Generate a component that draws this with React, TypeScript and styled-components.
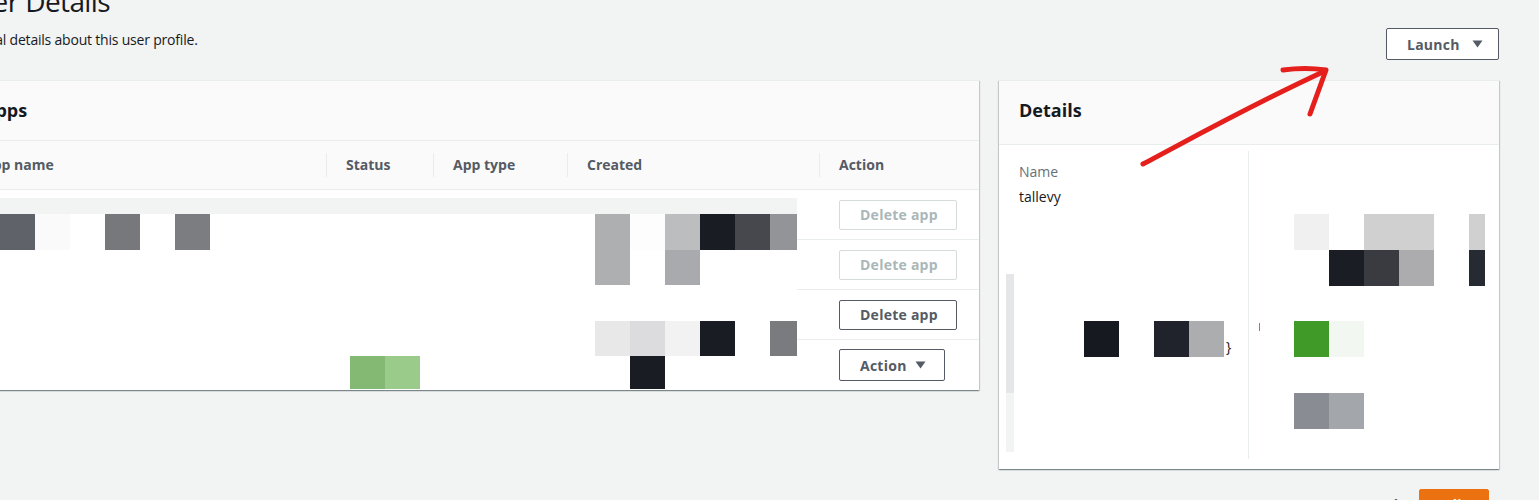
import React from 'react';
import styled, { createGlobalStyle } from 'styled-components';

type Cell = { c: number; r: number; color: string; span?: number };

const appsCells: Cell[] = [
  { c: 0, r: 0, color: '#5f6268' },
  { c: 1, r: 0, color: '#fafafa' },
  { c: 3, r: 0, color: '#77787c' },
  { c: 5, r: 0, color: '#7c7d81' },
  { c: 17, r: 0, color: '#aeafb0' },
  { c: 18, r: 0, color: '#fdfdfd' },
  { c: 19, r: 0, color: '#bcbdbe' },
  { c: 20, r: 0, color: '#1a1c23' },
  { c: 21, r: 0, color: '#46484d' },
  { c: 22, r: 0, color: '#939497' },
  { c: 17, r: 1, color: '#aeafb0' },
  { c: 19, r: 1, color: '#a9aaad' },
  { c: 17, r: 3, color: '#e8e8e8' },
  { c: 18, r: 3, color: '#dcdcde' },
  { c: 19, r: 3, color: '#f2f2f2' },
  { c: 20, r: 3, color: '#1a1c23' },
  { c: 22, r: 3, color: '#7a7b7e' },
  { c: 10, r: 4, color: '#84b974' },
  { c: 11, r: 4, color: '#9bcb8b' },
  { c: 18, r: 4, color: '#1a1c23' },
];

const detailCells: Cell[] = [
  { c: 6, r: 0, color: '#f0f0f0' },
  { c: 8, r: 0, color: '#d0d0d0', span: 2 },
  { c: 11, r: 0, color: '#d0d0d0' },
  { c: 7, r: 1, color: '#1a1d24' },
  { c: 8, r: 1, color: '#3a3b40' },
  { c: 9, r: 1, color: '#acacae' },
  { c: 11, r: 1, color: '#262a33' },
  { c: 0, r: 3, color: '#161920' },
  { c: 2, r: 3, color: '#20232b' },
  { c: 3, r: 3, color: '#acadaf' },
  { c: 6, r: 3, color: '#3f9a27' },
  { c: 7, r: 3, color: '#f2f8f1' },
  { c: 6, r: 5, color: '#898c92' },
  { c: 7, r: 5, color: '#a3a6aa' },
];

const GlobalStyle = createGlobalStyle`
  html, body {
    margin: 0;
    padding: 0;
    background: #f2f3f3;
    font-family: "Open Sans", "Noto Sans", sans-serif;
    color: #16191f;
  }
  * { box-sizing: border-box; }
`;

const Caret = () => (
  <svg width="11" height="8" viewBox="0 0 11 8">
    <path d="M0.5 0.5 H10.5 L5.5 7.5 Z" />
  </svg>
);

const App: React.FC = () => {
  return (
    <Screen>
      <GlobalStyle />
      <Page>
        <Header>
          <div>
            <Title>User Details</Title>
            <Subtitle>General details about this user profile.</Subtitle>
          </div>
          <Button $width={113} $height={32} $pad={20} $gap={12}>
            Launch
            <Caret />
          </Button>
        </Header>

        <Columns>
          <Panel>
            <PanelHeader $height={59}>
              <PanelTitle>Apps</PanelTitle>
            </PanelHeader>
            <HeadRow>
              <HeadCell>App name</HeadCell>
              <HeadCell $divider>Status</HeadCell>
              <HeadCell $divider>App type</HeadCell>
              <HeadCell $divider>Created</HeadCell>
              <HeadCell $divider>Action</HeadCell>
            </HeadRow>
            <TableBody>
              <Row>
                <ActionCell>
                  <Button $width={118} $height={30} $pad={20} $disabled>
                    Delete app
                  </Button>
                </ActionCell>
              </Row>
              <Row>
                <ActionCell>
                  <Button $width={118} $height={30} $pad={20} $disabled>
                    Delete app
                  </Button>
                </ActionCell>
              </Row>
              <Row>
                <ActionCell>
                  <Button $width={118} $height={30} $pad={20}>
                    Delete app
                  </Button>
                </ActionCell>
              </Row>
              <Row $last>
                <ActionCell>
                  <Button $width={106} $height={32} $pad={20} $gap={8}>
                    Action
                    <Caret />
                  </Button>
                </ActionCell>
              </Row>
              <AppsRedaction>
                <Band />
                <Mosaic $cols="repeat(23, 35px)" $rowH={35.6} $left={37}>
                  {appsCells.map((b, i) => (
                    <Block key={i} $c={b.c} $r={b.r} $span={b.span} $color={b.color} />
                  ))}
                </Mosaic>
              </AppsRedaction>
            </TableBody>
          </Panel>

          <Panel>
            <PanelHeader $height={63}>
              <PanelTitle>Details</PanelTitle>
            </PanelHeader>
            <DetailsBody>
              <DetailsColumn>
                <Label>Name</Label>
                <Value>tallevy</Value>
              </DetailsColumn>
              <DetailsColumn $divider />
            </DetailsBody>
            <DetailsRedaction>
              <SideBar />
              <Mosaic
                $cols="repeat(11, 35px) 16px"
                $rowH={35.8}
                $left={85}
                $top={133}
              >
                {detailCells.map((b, i) => (
                  <Block key={i} $c={b.c} $r={b.r} $span={b.span} $color={b.color} />
                ))}
                <Brace>{'}'}</Brace>
                <GreenTick />
              </Mosaic>
            </DetailsRedaction>
          </Panel>
        </Columns>

        <Footer>
          <LinkButton>Cancel</LinkButton>
          <PrimaryButton>Edit</PrimaryButton>
        </Footer>
      </Page>

      <Annotation width="1539" height="500" viewBox="0 0 1539 500">
        <path
          d="M1143 164 C1185 142, 1245 108, 1325 71"
          fill="none"
          stroke="#e41f1c"
          strokeWidth="5"
          strokeLinecap="round"
        />
        <path
          d="M1283 70 Q1305 67 1326 70 Q1318 92 1310 114"
          fill="none"
          stroke="#e41f1c"
          strokeWidth="5"
          strokeLinecap="round"
          strokeLinejoin="round"
        />
      </Annotation>
    </Screen>
  );
};

const Screen = styled.div`
  position: relative;
  height: 500px;
  overflow: hidden;
`;

const Page = styled.div`
  margin-left: -37px;
  margin-top: -17px;
  width: calc(100% + 37px);
  padding-right: 40px;
`;

const Header = styled.div`
  display: flex;
  justify-content: space-between;
  align-items: flex-end;
  margin-bottom: 20px;
`;

const Title = styled.h1`
  margin: 0 0 0 -3px;
  font-size: 28px;
  line-height: 36px;
  font-weight: 400;
  letter-spacing: -0.6px;
  color: #16191f;
`;

const Subtitle = styled.p`
  margin: 10px 0 9px -7px;
  font-size: 14px;
  line-height: 22px;
  letter-spacing: -0.2px;
  color: #16191f;
`;

const Button = styled.button<{
  $width: number;
  $height: number;
  $pad: number;
  $gap?: number;
  $disabled?: boolean;
}>`
  display: inline-flex;
  align-items: center;
  justify-content: flex-start;
  gap: ${(p) => p.$gap ?? 0}px;
  width: ${(p) => p.$width}px;
  height: ${(p) => p.$height}px;
  padding: 0 0 0 ${(p) => p.$pad}px;
  background: #fff;
  border: 1px solid ${(p) => (p.$disabled ? '#d5dbdb' : '#545b64')};
  border-radius: 2px;
  color: ${(p) => (p.$disabled ? '#aab7b8' : '#545b64')};
  font-family: inherit;
  font-size: 14px;
  font-weight: 700;
  letter-spacing: 0.25px;

  svg path {
    fill: ${(p) => (p.$disabled ? '#aab7b8' : '#545b64')};
  }
`;

const Columns = styled.div`
  display: grid;
  grid-template-columns: 1fr 500px;
  gap: 20px;
  align-items: start;
`;

const Panel = styled.section`
  position: relative;
  background: #fff;
  border-top: 1px solid #eaeded;
  box-shadow: 0 1px 1px 0 rgba(0, 28, 36, 0.3), 1px 1px 1px 0 rgba(0, 28, 36, 0.15),
    -1px 1px 1px 0 rgba(0, 28, 36, 0.15);
`;

const PanelHeader = styled.div<{ $height: number }>`
  height: ${(p) => p.$height + 1}px;
  padding: 18px 20px 0;
  background: #fafafa;
  border-bottom: 1px solid #eaeded;
`;

const PanelTitle = styled.h2`
  margin: 0;
  font-size: 18px;
  line-height: 22px;
  font-weight: 700;
  color: #16191f;
`;

const HeadRow = styled.div`
  display: grid;
  grid-template-columns: 1fr 107px 134px 252px 160px;
  height: 49px;
  background: #fafafa;
  border-bottom: 1px solid #eaeded;
`;

const HeadCell = styled.div<{ $divider?: boolean }>`
  position: relative;
  display: flex;
  align-items: center;
  padding: 0 0 2px 20px;
  font-size: 14px;
  font-weight: 700;
  color: #545b64;

  &::before {
    content: '';
    display: ${(p) => (p.$divider ? 'block' : 'none')};
    position: absolute;
    left: 0;
    top: 12px;
    bottom: 12px;
    width: 1px;
    background: #eaeded;
  }
`;

const TableBody = styled.div`
  position: relative;
`;

const Row = styled.div<{ $last?: boolean }>`
  display: grid;
  grid-template-columns: 1fr 160px;
  height: 50px;
  border-bottom: ${(p) => (p.$last ? 'none' : '1px solid #eaeded')};

  & > * {
    grid-column: 2;
  }
`;

const ActionCell = styled.div`
  display: flex;
  align-items: center;
  padding-left: 20px;
`;

const AppsRedaction = styled.div`
  position: absolute;
  left: 0;
  top: 0;
  width: 834px;
  height: 199px;
  overflow: hidden;
  background: #fff;
`;

const Band = styled.div`
  height: 16px;
  margin-top: 8px;
  background: #f2f3f3;
`;

const Mosaic = styled.div<{ $cols: string; $rowH: number; $left: number; $top?: number }>`
  display: grid;
  grid-template-columns: ${(p) => p.$cols};
  grid-template-rows: repeat(6, ${(p) => p.$rowH}px);
  margin-left: ${(p) => p.$left}px;
  margin-top: ${(p) => p.$top ?? 0}px;
`;

const Block = styled.div<{ $c: number; $r: number; $span?: number; $color: string }>`
  grid-column: ${(p) => p.$c + 1} / span ${(p) => p.$span ?? 1};
  grid-row: ${(p) => p.$r + 1};
  background: ${(p) => p.$color};
`;

const Brace = styled.span`
  grid-column: 5;
  grid-row: 4;
  align-self: end;
  padding: 0 0 1px 2px;
  font-size: 14px;
  line-height: 18px;
  color: #16191f;
`;

const GreenTick = styled.span`
  grid-column: 6;
  grid-row: 4;
  width: 1px;
  height: 8px;
  margin-top: 2px;
  background: #5aa845;
`;

const DetailsBody = styled.div`
  display: grid;
  grid-template-columns: 249px 1fr;
  padding: 6px 0 10px;
`;

const DetailsColumn = styled.div<{ $divider?: boolean }>`
  min-height: 308px;
  padding: 10px 20px;
  border-left: ${(p) => (p.$divider ? '1px solid #eaeded' : 'none')};
`;

const Label = styled.div`
  font-size: 14px;
  line-height: 22px;
  color: #687078;
`;

const Value = styled.div`
  margin-top: 3px;
  font-size: 14px;
  line-height: 22px;
  color: #16191f;
`;

const DetailsRedaction = styled.div`
  position: absolute;
  inset: 0;
  pointer-events: none;
`;

const SideBar = styled.div`
  position: absolute;
  left: 7px;
  top: 193px;
  width: 8px;
  height: 178px;
  background: linear-gradient(#e5e6e8 0 119px, #f2f3f3 119px 100%);
`;

const Footer = styled.div`
  display: flex;
  justify-content: flex-end;
  margin-top: 20px;
  padding-right: 10px;
`;

const LinkButton = styled.button`
  display: flex;
  align-items: flex-start;
  height: 32px;
  padding: 6px 20px 0;
  background: transparent;
  border: 1px solid transparent;
  font-family: inherit;
  font-size: 14px;
  line-height: 18px;
  font-weight: 700;
  color: #545b64;
`;

const PrimaryButton = styled.button`
  display: flex;
  align-items: flex-start;
  justify-content: center;
  height: 32px;
  width: 70px;
  padding: 6px 0 0;
  background: #ec7211;
  border: 1px solid #ec7211;
  border-radius: 2px;
  font-family: inherit;
  font-size: 14px;
  line-height: 18px;
  font-weight: 700;
  color: #fff;
`;

const Annotation = styled.svg`
  position: absolute;
  left: 0;
  top: 0;
  pointer-events: none;
`;

export default App;
